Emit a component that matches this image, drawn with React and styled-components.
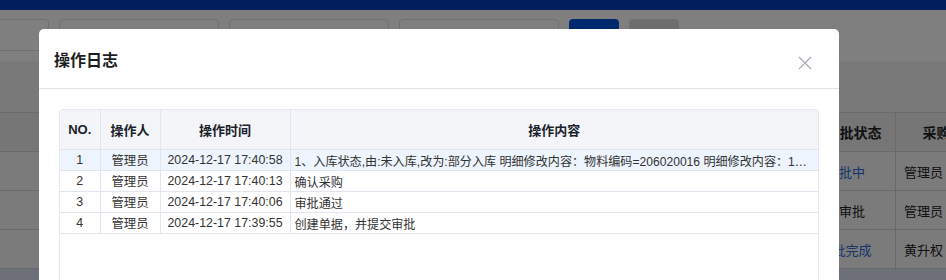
import React from "react";
import styled, { createGlobalStyle } from "styled-components";

const GlobalStyle = createGlobalStyle`
  html, body {
    margin: 0;
    padding: 0;
    width: 946px;
    height: 280px;
    overflow: hidden;
    background: #ffffff;
    font-family: "Liberation Sans", "Noto Sans CJK SC", sans-serif;
  }
`;

const Page = styled.div`
  width: 946px;
  height: 280px;
  overflow: hidden;
  background: #ffffff;
`;

const TopBar = styled.div`
  height: 10px;
  background: #003eb8;
`;

const FilterRow = styled.div`
  display: flex;
  gap: 10px;
  height: 32px;
  margin: 9px 0 10px -111px;
`;

const FilterInput = styled.div`
  width: 158px;
  border: 1px solid #dcdfe6;
  border-radius: 4px;
  background: #fff;
`;

const FilterButton = styled.div`
  width: 50px;
  border-radius: 4px;
  background: ${(p) => (p.$primary ? "#0052de" : "#dcdcdc")};
`;

const Toolbar = styled.div`
  height: 51px;
  background: #f2f2f3;
  border-bottom: 1px solid #d4d4d4;
`;

const BgTable = styled.div`
  display: grid;
  grid-template-columns: 796px 100px 80px;
  background: #f4f4f4;
`;

const BgCell = styled.div`
  height: 38px;
  display: flex;
  align-items: center;
  justify-content: ${(p) => (p.$start ? "flex-start" : "center")};
  padding: ${(p) => (p.$start ? "0 0 0 8px" : "0")};
  padding-left: ${(p) => (p.$shift ? "16px" : undefined)};
  font-size: ${(p) => (p.$head ? "14px" : "13px")};
  font-weight: ${(p) => (p.$head ? 700 : 400)};
  color: ${(p) => (p.$link ? "#2e66d6" : "#222")};
  background: ${(p) => (p.$head ? "#ededed" : "#f6f6f6")};
  border-bottom: 1px solid #d2d2d2;
  border-right: 1px solid #d2d2d2;
  white-space: nowrap;
`;

const BgFooter = styled.div`
  height: 20px;
  background: #dce0f2;
`;

const Overlay = styled.div`
  position: fixed;
  inset: 0;
  background: rgba(0, 0, 0, 0.5);
  padding-top: 29px;
`;

const Modal = styled.div`
  margin-left: 39px;
  width: 800px;
  height: 400px;
  background: #fff;
  border-radius: 5px 5px 0 0;
`;

const ModalHeader = styled.div`
  height: 59px;
  display: flex;
  align-items: center;
  justify-content: space-between;
  padding: 0 27px 0 15px;
  border-bottom: 1px solid #e4e4e7;
`;

const ModalTitle = styled.div`
  font-size: 16px;
  font-weight: 700;
  color: #1d1d1f;
`;

const CloseButton = styled.div`
  width: 14px;
  height: 14px;
  display: flex;
  align-items: center;
  justify-content: center;
  margin-top: 8px;
`;

const ModalBody = styled.div`
  padding: 20px;
`;

const TableBox = styled.div`
  height: 300px;
  border: 1px solid #e3e7ee;
  border-radius: 4px;
  overflow: hidden;
`;

const LogTable = styled.table`
  width: 100%;
  border-collapse: collapse;
  table-layout: fixed;
`;

const Th = styled.th`
  height: 39px;
  padding: 0;
  background: #f3f5f9;
  font-size: 13px;
  font-weight: 700;
  color: #1b1f2a;
  text-align: center;
  border-bottom: 1px solid #e1e6ee;
  border-right: 1px solid #e1e6ee;
  &:last-child {
    border-right: none;
  }
`;

const Tr = styled.tr`
  background: ${(p) => (p.$active ? "#eef5fe" : "#fff")};
`;

const Td = styled.td`
  height: 20px;
  padding: 0 4px;
  font-size: ${(p) => (p.$left ? "12.1px" : "12.4px")};
  color: #333;
  text-align: ${(p) => (p.$left ? "left" : "center")};
  white-space: nowrap;
  overflow: hidden;
  text-overflow: ellipsis;
  border-bottom: 1px solid #e1e6ee;
  border-right: 1px solid #e1e6ee;
  &:last-child {
    border-right: none;
  }
`;

const logs = [
  {
    no: 1,
    user: "管理员",
    time: "2024-12-17 17:40:58",
    content:
      "1、入库状态,由:未入库,改为:部分入库 明细修改内容：物料编码=206020016 明细修改内容：1、入库数量,由:0,改为:20",
  },
  { no: 2, user: "管理员", time: "2024-12-17 17:40:13", content: "确认采购" },
  { no: 3, user: "管理员", time: "2024-12-17 17:40:06", content: "审批通过" },
  { no: 4, user: "管理员", time: "2024-12-17 17:39:55", content: "创建单据，并提交审批" },
];

const bgRows = [
  { status: "审批中", link: true, buyer: "管理员" },
  { status: "待审批", link: false, buyer: "管理员" },
  { status: "审批完成", link: true, buyer: "黄升权" },
];

function CloseIcon() {
  return (
    <svg width="14" height="14" viewBox="0 0 14 14">
      <path d="M1 1 L13 13 M13 1 L1 13" stroke="#a9acb3" strokeWidth="1.2" fill="none" />
    </svg>
  );
}

export default function App() {
  return (
    <>
      <GlobalStyle />
      <Page>
        <TopBar />
        <FilterRow>
          <FilterInput />
          <FilterInput />
          <FilterInput />
          <FilterInput />
          <FilterButton $primary />
          <FilterButton />
        </FilterRow>
        <Toolbar />
        <BgTable>
          <BgCell $head />
          <BgCell $head $shift>审批状态</BgCell>
          <BgCell $head $shift>采购员</BgCell>
          {bgRows.map((r) => (
            <React.Fragment key={r.status}>
              <BgCell />
              <BgCell $link={r.link}>{r.status}</BgCell>
              <BgCell $start>{r.buyer}</BgCell>
            </React.Fragment>
          ))}
        </BgTable>
        <BgFooter />
      </Page>
      <Overlay>
        <Modal>
          <ModalHeader>
            <ModalTitle>操作日志</ModalTitle>
            <CloseButton>
              <CloseIcon />
            </CloseButton>
          </ModalHeader>
          <ModalBody>
            <TableBox>
              <LogTable>
                <colgroup>
                  <col style={{ width: 40 }} />
                  <col style={{ width: 60 }} />
                  <col style={{ width: 130 }} />
                  <col />
                </colgroup>
                <thead>
                  <tr>
                    <Th>NO.</Th>
                    <Th>操作人</Th>
                    <Th>操作时间</Th>
                    <Th>操作内容</Th>
                  </tr>
                </thead>
                <tbody>
                  {logs.map((l) => (
                    <Tr key={l.no} $active={l.no === 1}>
                      <Td>{l.no}</Td>
                      <Td>{l.user}</Td>
                      <Td>{l.time}</Td>
                      <Td $left>{l.content}</Td>
                    </Tr>
                  ))}
                </tbody>
              </LogTable>
            </TableBox>
          </ModalBody>
        </Modal>
      </Overlay>
    </>
  );
}
